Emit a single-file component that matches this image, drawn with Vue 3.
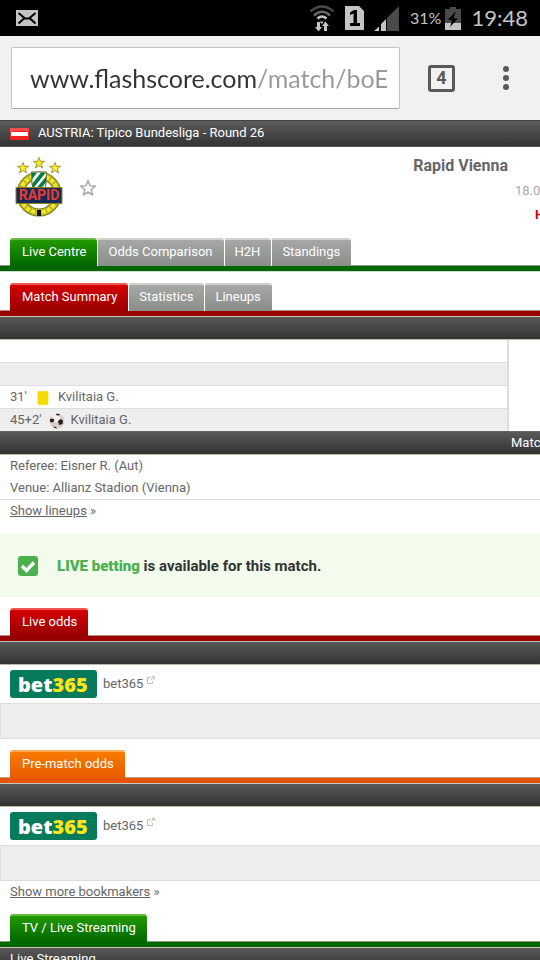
<template>
  <div class="screen">
    <div class="status-bar">
      <svg class="mail" width="22" height="16" viewBox="0 0 22 16">
        <rect width="22" height="16" fill="#c4c4c4" />
        <path d="M2.500 3 9 8.500h4L19.500 3M2.500 13.500 8 8.500M19.500 13.500 14 8.500" fill="none" stroke="#000" stroke-width="2" />
      </svg>
      <div class="status-icons">
        <svg width="26" height="28" viewBox="0 0 26 28">
          <g fill="none" stroke-width="2.400">
            <path d="M1.500 7.500Q13-2.500 24.500 7.500" stroke="#4a4a4a" />
            <path d="M5 11.500Q13 4 21 11.500" stroke="#6a6a6a" />
            <path d="M8.500 14.500Q13 10.500 17.500 14.500" stroke="#c4c4c4" />
          </g>
          <path d="M10.500 17.500h4L13 20z" fill="#c4c4c4" />
          <path d="M8 18h3v5h2l-3.500 4.500L6 23h2zM15 27h3v-5h2l-3.500-4.500L13 22h2z" fill="#c4c4c4" />
        </svg>
        <svg width="19" height="24" viewBox="0 0 19 24">
          <path d="M0 0h14l5 5v19H0z" fill="#c4c4c4" />
          <path d="M5 6.500 9 4h3v13h3v3H5v-3h3.500V7.500L5 9z" fill="#000" />
        </svg>
        <svg width="26" height="25" viewBox="0 0 26 25">
          <path d="M0 25 5 20.500V25zM7 25v-7l5-5v12z" fill="#c4c4c4" />
          <path d="M13 25V12L25 0v25z" fill="#4a4a4a" />
        </svg>
        <span class="battery-text">31%</span>
        <svg width="16" height="23" viewBox="0 0 16 23">
          <path d="M5 0h6v2h5v21H0V2h5z" fill="#4a4a4a" />
          <path d="M0 16h16v7H0z" fill="#c4c4c4" />
          <path d="M11 4 3 12.500l4 1L5 20l7.500-8-4-1.500z" fill="#000" />
        </svg>
        <span class="clock">19:48</span>
      </div>
    </div>

    <div class="toolbar">
      <div class="address-box">
        <input v-model="address" class="address" type="text" aria-label="Address" />
      </div>
      <button class="tab-count" aria-label="Open tabs">4</button>
      <button class="menu" aria-label="Menu">
        <svg width="6" height="24" viewBox="0 0 6 24" fill="#595959">
          <circle cx="3" cy="3" r="3" />
          <circle cx="3" cy="12" r="3" />
          <circle cx="3" cy="21" r="3" />
        </svg>
      </button>
    </div>

    <div class="league">
      <svg width="19" height="12" viewBox="0 0 19 12">
        <rect width="19" height="12" rx="1" fill="#f32121" />
        <rect x="1" y="4" width="17" height="4" fill="#fff" />
        <path d="M0 0h19v3Q9 2 0 4z" fill="#fff" opacity=".2" />
      </svg>
      <span>AUSTRIA: Tipico Bundesliga - Round 26</span>
    </div>

    <header class="match">
      <svg class="crest" width="48" height="60" viewBox="0 0 48 60">
        <g fill="#f4ed20" stroke="#8b8420" stroke-width=".8">
          <path v-for="star in stars" :key="star" :transform="star" d="M0-5.500 1.500-1.700 5.500-1.700 2.300.8 3.500 5 0 2.500-3.500 5-2.300.8-5.500-1.700-1.500-1.700z" />
        </g>
        <circle cx="24" cy="37" r="18.500" fill="none" stroke="#6f6c15" stroke-width="8" />
        <circle cx="24" cy="37" r="18.500" fill="none" stroke="#b5af18" stroke-width="6.500" />
        <circle cx="24" cy="37" r="18.500" fill="none" stroke="#f0e832" stroke-width="4" stroke-dasharray="4 1.500" />
        <path d="M16.500 15h15l-.5 12q-1 8-7 9-6-1-7-9z" fill="#fff" stroke="#6f6c15" />
        <path d="M17 15.500h5l-5 7zM26 15.500h5l-13 16-1-4.500zM31 19.500v6L23 35l-3-2z" fill="#087a48" />
        <path d="M1 30.500h46v16H1z" fill="#142c59" stroke="#8d861c" />
        <text x="24" y="43" text-anchor="middle" class="crest-name">RAPID</text>
        <path d="M22 53h4v6h-4z" fill="#111" />
      </svg>
      <button class="favourite" aria-label="Add to favourites">
        <svg width="18" height="18" viewBox="0 0 18 18">
          <path d="m9 1.500 2 5.300 5.500.2-4.300 3.600L13.700 16 9 13l-4.700 3 1.500-5.400L1.500 7 7 6.800z" fill="#fff" stroke="#aaa" stroke-width="1.500" stroke-linejoin="round" />
        </svg>
      </button>
      <h1 class="team">Rapid Vienna</h1>
      <div class="match-info">
        <span class="date">18.0</span>
        <span class="stage">H</span>
      </div>
    </header>

    <nav class="tabs green">
      <button v-for="(tab, index) in mainTabs" :key="tab" :class="['tab', { active: index === 0 }]">{{ tab }}</button>
    </nav>
    <nav class="tabs red summary">
      <button v-for="(tab, index) in summaryTabs" :key="tab" :class="['tab', { active: index === 0 }]">{{ tab }}</button>
    </nav>
    <div class="bar"></div>

    <table class="events">
      <tbody>
        <tr v-for="(event, index) in events" :key="index">
          <td>
            <div class="event">
              <template v-if="event.player">
                <span>{{ event.time }}</span>
                <svg v-if="event.type === 'card'" class="card" width="12" height="14" viewBox="0 0 12 14">
                  <rect x=".5" width="11" height="14" rx="1" fill="#f7e36a" />
                  <rect x="1" y=".5" width="10" height="13" fill="#f5dc00" />
                </svg>
                <svg v-else class="ball" width="16" height="16" viewBox="0 0 16 16">
                  <circle cx="8" cy="8" r="7.500" fill="#d9cfc8" />
                  <circle cx="7" cy="5" r="4" fill="#f5f0ec" />
                  <path d="m9 8 2.500-2L14 7.500l-.5 3.500-3.500 1zM1 6l3-.5L5.500 7 4 9.500 1 9zM7 .7l4 .3-1 1.500-2.500-.2zM4 13.500l3 .5 1 1.500q-3 0-4-2z" fill="#29211e" />
                </svg>
                <span>{{ event.player }}</span>
              </template>
            </div>
          </td>
          <td class="away"></td>
        </tr>
      </tbody>
    </table>

    <div class="bar"><span class="bar-right">Matc</span></div>
    <div class="details">
      <p>Referee: Eisner R. (Aut)</p>
      <p>Venue: Allianz Stadion (Vienna)</p>
    </div>
    <p class="more"><a href="#">Show lineups</a> »</p>

    <div class="live-betting">
      <svg width="20" height="20" viewBox="0 0 20 20">
        <rect width="20" height="20" rx="3" fill="#4caf50" />
        <path d="m4 10 4.500 4.500L16 6.500" fill="none" stroke="#fff" stroke-width="3.500" />
      </svg>
      <p><strong>LIVE betting</strong> is available for this match.</p>
    </div>

    <template v-for="section in oddsSections" :key="section.title">
      <div :class="['tabs', 'odds', section.color]">
        <button class="tab active">{{ section.title }}</button>
      </div>
      <div class="bar"></div>
      <div class="bookmaker">
        <svg class="bet-logo" width="87" height="28" viewBox="0 0 87 28">
          <rect width="87" height="28" rx="3" fill="#067b5b" />
          <text x="8" y="22" class="bet-text">bet<tspan fill="#ffe418">365</tspan></text>
        </svg>
        <a href="#">bet365</a>
        <svg class="external" width="8" height="8" viewBox="0 0 8 8">
          <path d="M4 1.500H.5v6h5V5M5 .5h2.500V3M4 4l3.500-3.500" fill="none" stroke="#c4c4b4" />
        </svg>
      </div>
      <div class="odds-row"></div>
    </template>
    <p class="more bookmakers"><a href="#">Show more bookmakers</a> »</p>

    <div class="tabs green">
      <button class="tab active">TV / Live Streaming</button>
    </div>
    <div class="bar"><span>Live Streaming</span></div>
  </div>
</template>

<script setup>
import { ref } from 'vue'

const address = ref('www.flashscore.com/match/boE')
const mainTabs = ['Live Centre', 'Odds Comparison', 'H2H', 'Standings']
const summaryTabs = ['Match Summary', 'Statistics', 'Lineups']
const stars = ['translate(8 11)', 'translate(24 6)', 'translate(40 11)']

const events = ref([
  {},
  {},
  { time: "31'", type: 'card', player: 'Kvilitaia G.' },
  { time: "45+2'", type: 'goal', player: 'Kvilitaia G.' }
])

const oddsSections = [
  { title: 'Live odds', color: 'red' },
  { title: 'Pre-match odds', color: 'orange' }
]
</script>

<style>
body {
  margin: 0;
}
</style>

<style scoped>
.screen {
  height: 100vh;
  overflow: hidden;
  background: #fff;
  color: #666;
  font: 13px/22px Roboto, sans-serif;
}

button {
  border: 0;
  padding: 0;
  background: none;
  font: inherit;
}

p,
h1 {
  margin: 0;
}

svg {
  display: block;
  flex: none;
}

a {
  color: inherit;
}

.status-bar {
  display: flex;
  justify-content: space-between;
  align-items: center;
  height: 36px;
  padding: 0 12px 0 16px;
  background: #000;
  color: #c4c4c4;
  font-family: Lato, sans-serif;
}

.status-icons {
  display: flex;
  align-items: center;
  gap: 10px;
}

.battery-text {
  margin-right: -6px;
  font-size: 16px;
}

.clock {
  font-size: 22px;
}

.toolbar {
  display: flex;
  align-items: center;
  height: 84px;
  padding: 0 31px 0 11px;
  background: #f1f1f1;
}

.address-box {
  flex: 1;
  min-width: 0;
  margin-right: 28px;
  padding: 0 12px 0 18px;
  border: 1px solid #c4c4c4;
  border-bottom-color: #aaa;
  border-radius: 2px;
  background: #fff;
}

.address {
  display: block;
  box-sizing: border-box;
  width: 100%;
  height: 60px;
  padding: 0;
  border: 0;
  background: linear-gradient(to right, #333 226px, #999 226px) text;
  color: transparent;
  font: 25px Lato, sans-serif;
}

.tab-count {
  box-sizing: border-box;
  width: 27px;
  height: 27px;
  margin-right: 48px;
  border: 3px solid #595959;
  border-radius: 3px;
  color: #595959;
  font-size: 18px;
  font-weight: bold;
  line-height: 20px;
}

.league {
  display: flex;
  align-items: center;
  gap: 9px;
  height: 25px;
  padding: 0 10px;
  border-top: 1px solid #444;
  border-bottom: 1px solid #555;
  background: linear-gradient(#5c5c5c, #333);
  color: #fff;
}

.league span {
  padding-bottom: 2px;
}

.match {
  display: flex;
  align-items: flex-start;
  height: 91px;
}

.crest {
  margin: 10px 16px 0 15px;
}

.crest-name {
  fill: #e93b2d;
  font: bold 14px Roboto, sans-serif;
}

.favourite {
  margin-top: 32px;
}

.team {
  margin: 8px 0 0 auto;
  font-size: 16px;
  font-weight: bold;
}

.match-info {
  display: flex;
  flex-direction: column;
  align-items: flex-end;
  width: 32px;
  padding-top: 33px;
}

.date {
  width: 25px;
  color: #aaa;
}

.stage {
  width: 5px;
  overflow: hidden;
  color: #c00;
  font-weight: bold;
  line-height: 26px;
}

.tabs {
  display: flex;
  height: 28px;
  padding-left: 10px;
  border-bottom: 5px solid #060;
  background: linear-gradient(#8a9a80, #8a9a80) bottom / 100% 1px no-repeat;
  box-shadow: 0 1px #cdc;
}

.tabs.red {
  border-bottom-color: #900;
  background-image: linear-gradient(#b08a80, #b08a80);
}

.tabs.orange {
  border-bottom-color: #e65505;
  background-image: linear-gradient(#c09a80, #c09a80);
}

.tabs.summary {
  margin-top: 12px;
}

.tabs.odds {
  margin-top: 11px;
}

.tab {
  padding: 0 11px 3px 12px;
  border-top: 2px solid #d0d2d0;
  border-radius: 3px 3px 0 0;
  background: linear-gradient(#a6a8a6, #8b8d8b);
  color: #fff;
  line-height: 22px;
}

.tab + .tab {
  padding-left: 10px;
  border-left: 1px solid #fff;
}

.tab.active {
  border-top-color: #6b4;
  background: linear-gradient(#290, #060);
}

.red .tab.active {
  border-top-color: #e55;
  background: linear-gradient(#d40000, #900);
}

.orange .tab.active {
  border-top-color: #fa5;
  background: linear-gradient(#f87b00, #e85b00);
}

.bar {
  display: flex;
  height: 22px;
  padding-left: 10px;
  border-top: 1px solid #666;
  border-bottom: 1px solid #bbb9a8;
  background: linear-gradient(#585858, #333);
  color: #fff;
}

.tabs + .bar {
  border-top-color: #c9c5b8;
}

.bar-right {
  width: 29px;
  margin-left: auto;
}

.events {
  width: 100%;
  border-collapse: collapse;
}

.events td {
  height: 22px;
  padding: 0;
  border-bottom: 1px solid #ddd;
}

.events tr:nth-child(even) td {
  background: #eee;
}

.events tr:last-child td {
  border-bottom: 0;
}

.events .away,
.events tr:nth-child(even) .away {
  width: 31px;
  border-bottom: 0;
  border-left: 2px solid #ddd;
  background: #fff;
}

.event {
  display: flex;
  align-items: center;
  padding-left: 10px;
}

.card {
  margin: 2px 9px 0 10px;
}

.ball {
  margin: 2px 6px 0 7px;
}

.details {
  padding: 0 10px;
  border-bottom: 1px solid #ddd;
}

.more {
  padding: 0 10px;
}

.bookmakers {
  margin-bottom: 11px;
}

.live-betting {
  display: flex;
  align-items: center;
  gap: 19px;
  height: 63px;
  margin-top: 12px;
  padding-left: 18px;
  background: #f2fbec;
  color: #333;
  font-size: 15px;
  font-weight: bold;
}

.live-betting strong {
  color: #4caf50;
}

.bookmaker {
  display: flex;
  align-items: center;
  height: 38px;
  padding-left: 10px;
}

.bookmaker a {
  margin: 0 4px 0 6px;
  text-decoration: none;
}

.bet-text {
  fill: #fff;
  font: 800 20px "Open Sans", sans-serif;
}

.external {
  margin-bottom: 8px;
}

.odds-row {
  height: 34px;
  border: 1px solid #ddd;
  border-right: 0;
  background: #eee;
}
</style>
